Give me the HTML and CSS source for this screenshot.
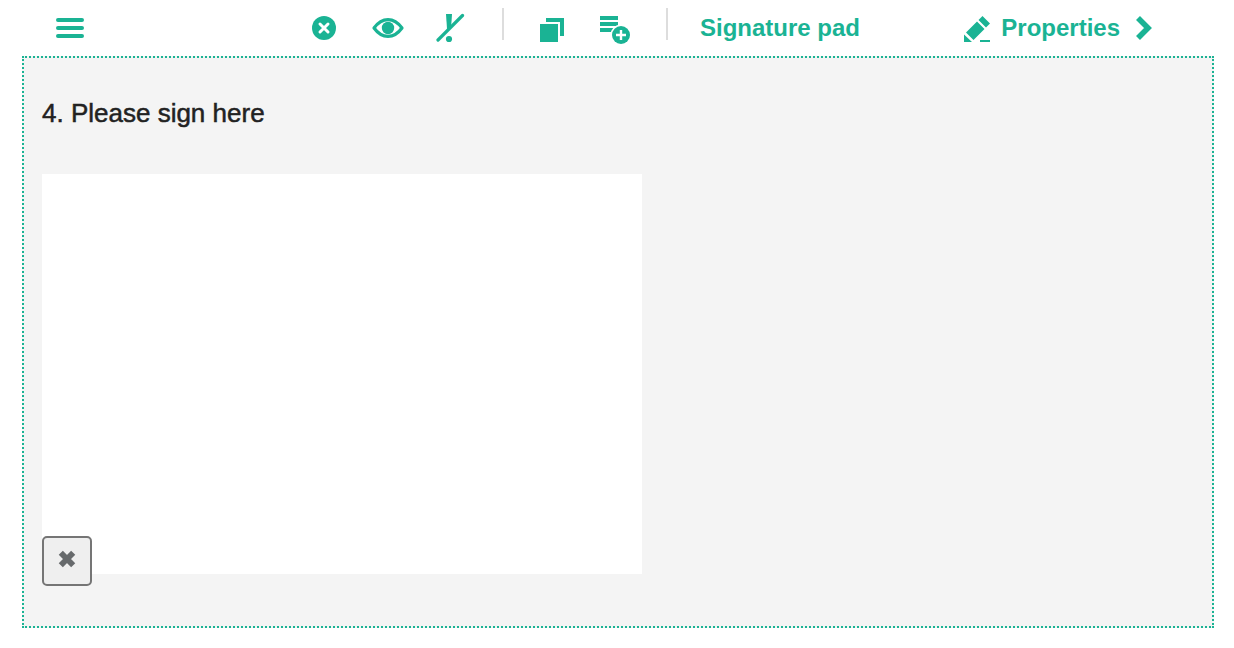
FILE: index.html
```html
<!DOCTYPE html>
<html lang="en">
<head>
  <meta charset="utf-8">
  <meta name="viewport" content="width=device-width, initial-scale=1">
  <title>Signature pad</title>
  <link rel="stylesheet" href="styles.css">
</head>
<body>
  <header class="toolbar">
    <button class="icon-button menu" type="button" aria-label="Menu">
      <svg viewBox="0 0 32 32"><path d="M4 8h24M4 16h24M4 24h24" fill="none" stroke="currentColor" stroke-width="4" stroke-linecap="round"/></svg>
    </button>
    <div class="tools">
      <button class="icon-button" type="button" aria-label="Delete">
        <svg viewBox="0 0 32 32"><circle cx="16" cy="16" r="12" fill="currentColor"/><path d="M12 12l8 8M20 12l-8 8" stroke="#fff" stroke-width="3" stroke-linecap="round"/></svg>
      </button>
      <button class="icon-button" type="button" aria-label="Visibility">
        <svg viewBox="0 0 32 32"><path d="M2 16C6 10.500 10.500 7.600 16 7.600S26 10.500 30 16C26 21.500 21.500 24.400 16 24.400S6 21.500 2 16z" fill="none" stroke="currentColor" stroke-width="3.200" stroke-linejoin="round"/><circle cx="16" cy="16" r="6.200" fill="currentColor"/></svg>
      </button>
      <button class="icon-button" type="button" aria-label="Not required">
        <svg viewBox="0 0 32 32"><path d="M10 2h6l-1 15h-4z" fill="currentColor"/><circle cx="13" cy="27" r="3.100" fill="currentColor"/><path d="M2 28L26.500 3.500" stroke="currentColor" stroke-width="3.200" stroke-linecap="round"/></svg>
      </button>
      <span class="divider"></span>
      <button class="icon-button" type="button" aria-label="Duplicate">
        <svg viewBox="0 0 32 32"><path d="M4 12h18v18H4zM10 6h18v18h-4V10H10z" fill="currentColor"/></svg>
      </button>
      <button class="icon-button" type="button" aria-label="Add to library">
        <svg viewBox="0 0 32 32"><path d="M0 4h18v4H0zM0 10h18v4H0zM0 16h18v4H0z" fill="currentColor"/><circle cx="21" cy="23" r="10.500" fill="#fff"/><circle cx="21" cy="23" r="9" fill="currentColor"/><path d="M16 23h10M21 18v10" stroke="#fff" stroke-width="2.400"/></svg>
      </button>
      <span class="divider"></span>
    </div>
    <span class="widget-name">Signature pad</span>
    <button class="properties" type="button">
      <svg class="pencil" viewBox="0 0 28 28"><path d="M2 16.500L13 5.500L20.500 13L9.500 24zM14.500 4L18.500 0L26 7.500L22 11.500zM0 18.500L8 26H0zM16 24h10v2H16z" fill="currentColor"/></svg>
      <span>Properties</span>
      <svg class="chevron" viewBox="0 0 16 24"><path d="M2 2L12 12L2 22" fill="none" stroke="currentColor" stroke-width="5.600"/></svg>
    </button>
  </header>
  <main class="question">
    <h1 class="question-title">4. Please sign here</h1>
    <div class="pad">
      <canvas class="pad-canvas" width="600" height="400" aria-label="Signature area"></canvas>
      <button class="clear" type="button" aria-label="Clear signature">
        <svg viewBox="0 0 18 18"><path d="M2.800 2.800l12.400 12.400M15.200 2.800L2.800 15.200" stroke="currentColor" stroke-width="5.800"/></svg>
      </button>
    </div>
  </main>
</body>
</html>
```

FILE: styles.css
```css
* {
  box-sizing: border-box;
}

body {
  margin: 0;
  background: #fff;
  color: #222;
  font-family: "Liberation Sans", Arial, sans-serif;
}

button {
  padding: 0;
  border: 0;
  background: none;
  color: inherit;
  font: inherit;
  cursor: pointer;
}

svg {
  display: block;
}

.toolbar {
  display: flex;
  align-items: center;
  gap: 32px;
  height: 56px;
  padding: 0 82px 0 54px;
  color: #1ab394;
  font-size: 24px;
  font-weight: 700;
  line-height: 32px;
  white-space: nowrap;
}

.icon-button,
.icon-button svg {
  width: 32px;
  height: 32px;
}

.icon-button {
  flex: none;
}

.menu {
  margin-right: 190px;
}

.tools {
  display: flex;
  align-items: center;
  gap: 32px;
}

.divider {
  width: 4px;
  height: 32px;
  margin-bottom: 8px;
  border-right: 2px solid #ddd;
}

.properties {
  display: flex;
  align-items: center;
  margin-left: auto;
}

.pencil {
  width: 28px;
  height: 28px;
  margin: 4px 9px 0 0;
}

.chevron {
  width: 16px;
  height: 24px;
  margin-left: 16px;
}

.question {
  margin: 0 20px 20px 22px;
  padding: 40px 18px;
  border: 2px dotted #1ab394;
  background: #f4f4f4;
}

.question-title {
  margin: 0 0 46px;
  font-size: 26px;
  font-weight: 400;
  line-height: 30px;
  -webkit-text-stroke: 0.5px currentColor;
}

.pad {
  position: relative;
  max-width: 600px;
  padding-bottom: 12px;
}

.pad-canvas {
  display: block;
  width: 100%;
  background: #fff;
}

.clear {
  position: absolute;
  bottom: 0;
  left: 0;
  display: grid;
  place-items: center;
  width: 50px;
  height: 50px;
  padding-bottom: 4px;
  border: 2px solid #757575;
  border-radius: 5px;
  background: #efefef;
  color: #676a6c;
}

.clear svg {
  width: 18px;
  height: 18px;
}
```
